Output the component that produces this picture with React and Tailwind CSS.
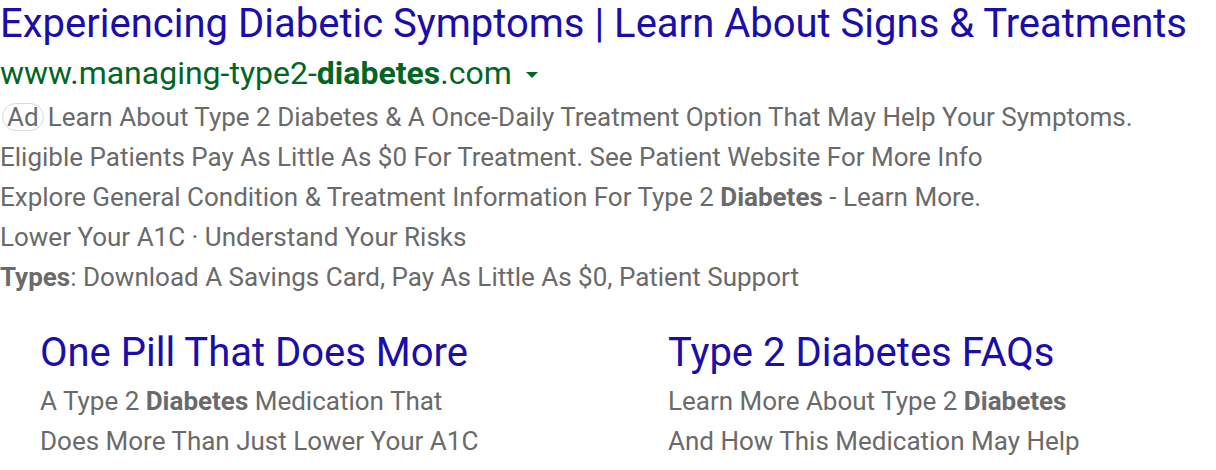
import React from "react";

const sitelinks = [
  {
    title: "One Pill That Does More",
    lines: [
      <>A Type 2 <b className="font-bold">Diabetes</b> Medication That</>,
      <>Does More Than Just Lower Your A1C</>,
    ],
  },
  {
    title: "Type 2 Diabetes FAQs",
    lines: [
      <>Learn More About Type 2 <b className="font-bold">Diabetes</b></>,
      <>And How This Medication May Help</>,
    ],
  },
];

export default function App() {
  return (
    <div className="w-[1216px] h-[470px] overflow-hidden bg-white font-['Roboto',sans-serif]">
      {/* Headline */}
      <h1 className="text-[40px] leading-[48px] text-[#1a0dab] font-normal whitespace-nowrap">
        Experiencing Diabetic Symptoms | Learn About Signs &amp; Treatments
      </h1>

      {/* Display URL */}
      <div className="flex items-center h-[49px] text-[32px] text-[#006621] whitespace-nowrap">
        <span>
          www.managing-type2-<b className="font-bold">diabetes</b>.com
        </span>
        <span className="ml-[14px] mt-[4px] w-0 h-0 border-l-[6px] border-r-[6px] border-t-[6px] border-l-transparent border-r-transparent border-t-[#006621]" />
      </div>

      {/* Description */}
      <div className="text-[26px] leading-[40px] text-[#6a6a6a] whitespace-nowrap">
        <p className="flex items-center">
          <span className="ml-[2px] mr-[4px] px-[4px] h-[28px] flex items-center leading-none text-[26px] rounded-[14px] border border-[#dadada]">
            Ad
          </span>
          Learn About Type 2 Diabetes &amp; A Once-Daily Treatment Option That May Help Your Symptoms.
        </p>
        <p>Eligible Patients Pay As Little As $0 For Treatment. See Patient Website For More Info</p>
        <p>
          Explore General Condition &amp; Treatment Information For Type 2{" "}
          <b className="font-bold">Diabetes</b> - Learn More.
        </p>
        <p>Lower Your A1C · Understand Your Risks</p>
        <p>
          <b className="font-bold">Types</b>: Download A Savings Card, Pay As Little As $0, Patient Support
        </p>
      </div>

      {/* Sitelinks */}
      <div className="grid grid-cols-[628px_1fr] pl-[40px] mt-[28px]">
        {sitelinks.map((s) => (
          <div key={s.title}>
            <div className="text-[40px] leading-[56px] text-[#1a0dab] whitespace-nowrap">{s.title}</div>
            <div className="text-[26px] leading-[40px] text-[#6a6a6a] whitespace-nowrap">
              {s.lines.map((l, i) => (
                <p key={i}>{l}</p>
              ))}
            </div>
          </div>
        ))}
      </div>
    </div>
  );
}
